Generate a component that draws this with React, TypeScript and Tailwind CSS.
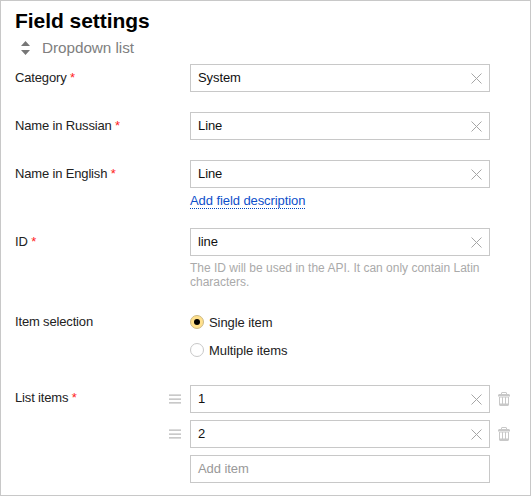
import type { ReactNode } from "react";

function ClearIcon() {
  return (
    <svg className="h-[11px] w-[11px] shrink-0" viewBox="0 0 11 11" fill="none" stroke="#a6a6a6" strokeWidth="1">
      <path d="M.5.5l10 10M10.5.5l-10 10" />
    </svg>
  );
}

function TextBox({ value, clear = true }: { value: string; clear?: boolean }) {
  return (
    <div className="flex h-7 w-[300px] shrink-0 items-center justify-between border border-[#c8c8c8] bg-white pr-[7px] pl-[7px]">
      <span className={clear ? "text-[#111]" : "text-[#999]"}>{value}</span>
      {clear && <ClearIcon />}
    </div>
  );
}

function Label({ text, required = true }: { text: string; required?: boolean }) {
  return (
    <div className="w-[175px] shrink-0 leading-[27px] tracking-[-0.16px] text-[#222]">
      {text}
      {required && <span className="text-[#f22]"> *</span>}
    </div>
  );
}

function Row({ label, required, className, children }: { label: string; required?: boolean; className: string; children: ReactNode }) {
  return (
    <div className={`flex items-start ${className}`}>
      <Label text={label} required={required} />
      <div>{children}</div>
    </div>
  );
}

function Radio({ text, checked = false }: { text: string; checked?: boolean }) {
  return (
    <div className="flex h-7 items-center gap-[5px] text-[#222]">
      <span
        className={`flex h-3.5 w-3.5 items-center justify-center rounded-full border ${
          checked ? "border-[#ccb985] bg-[#ffe08c]" : "border-[#c8c8c8] bg-white"
        }`}
      >
        {checked && <span className="h-1.5 w-1.5 rounded-full bg-black" />}
      </span>
      <span className="pt-0.5">{text}</span>
    </div>
  );
}

function Grip() {
  return (
    <svg className="mr-[9px] h-[10px] w-3" viewBox="0 0 12 10" fill="#b8b8b8">
      <path d="M0 .5h12v1.3H0zM0 4.4h12v1.3H0zM0 8.3h12v1.3H0z" />
    </svg>
  );
}

function Trash() {
  return (
    <svg className="ml-2 h-[14px] w-3" viewBox="0 0 12 14" fill="#c8c8c8">
      <path d="M3 2V1l1-1h4l1 1v1h2l1 1v1.5H0V3l1-1zM4 1v1h4V1zM1 5h10v8l-1 1H2l-1-1zM2 5.5v6h2v-6zM5 5.5v6h2v-6zM8 5.5v6h2v-6z" fillRule="evenodd" />
    </svg>
  );
}

function ListItem({ value }: { value: string }) {
  return (
    <div className="-ml-[21px] flex items-center">
      <Grip />
      <TextBox value={value} />
      <Trash />
    </div>
  );
}

export default function App() {
  return (
    <div className="h-[496px] w-[531px] overflow-hidden border border-[#c8c8c8] bg-white pl-3.5 font-['Liberation_Sans',Arial,sans-serif] text-[13px] tracking-[-0.08px] whitespace-nowrap">
      <h1 className="mt-2 h-6 text-[21px] leading-6 font-bold tracking-[-0.05px] text-black">Field settings</h1>
      <div className="mt-[5px] flex h-5 items-center text-[15.3px] tracking-[-0.05px] text-[#808080]">
        <svg className="mr-3 ml-1.5 h-[14px] w-[9px]" viewBox="0 0 9 14" fill="#777">
          <path d="M4.5 0L9 5H0zM0 9h9l-4.5 5z" />
        </svg>
        Dropdown list
      </div>
      <Row label="Category" className="mt-1.5">
        <TextBox value="System" />
      </Row>
      <Row label="Name in Russian" className="mt-5">
        <TextBox value="Line" />
      </Row>
      <Row label="Name in English" className="mt-5 h-[68px]">
        <TextBox value="Line" />
        <a className="mt-[5px] block w-fit border-b border-dotted border-[#04b] leading-[15px] text-[#0d4fcb]">Add field description</a>
      </Row>
      <Row label="ID" className="h-20">
        <TextBox value="line" />
        <p className="mt-[5px] text-[12px] leading-[14px] tracking-normal text-[#aaa]">
          The ID will be used in the API. It can only contain Latin
          <br />
          characters.
        </p>
      </Row>
      <Row label="Item selection" required={false} className="h-[76px]">
        <Radio text="Single item" checked />
        <Radio text="Multiple items" />
      </Row>
      <Row label="List items" className="">
        <div className="mt-px flex flex-col gap-[7px]">
          <ListItem value="1" />
          <ListItem value="2" />
          <TextBox value="Add item" clear={false} />
        </div>
      </Row>
    </div>
  );
}
